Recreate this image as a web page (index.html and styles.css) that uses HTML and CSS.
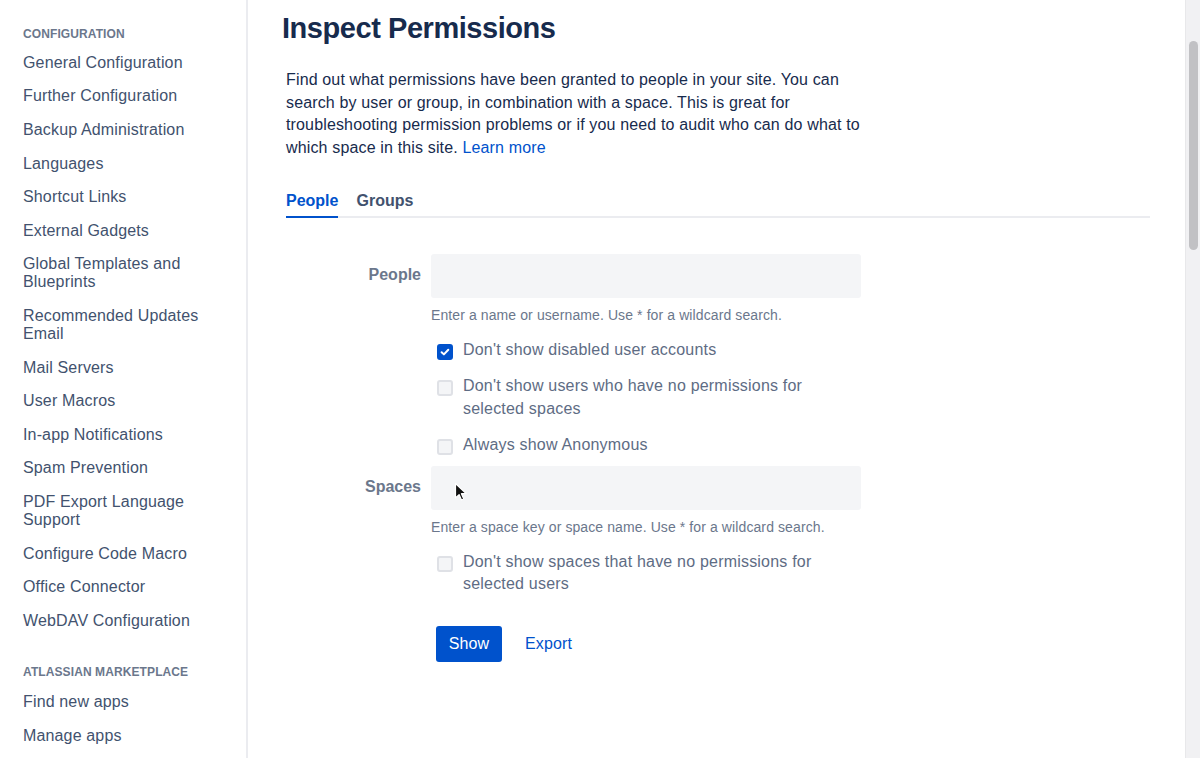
FILE: index.html
```html
<!DOCTYPE html>
<html lang="en">
<head>
<meta charset="utf-8">
<title>Inspect Permissions</title>
<link rel="stylesheet" href="styles.css">
</head>
<body>
<div class="app">
  <nav class="sidebar">
    <div class="nav-heading">Configuration</div>
    <ul class="nav-list">
      <li>General Configuration</li>
      <li>Further Configuration</li>
      <li>Backup Administration</li>
      <li>Languages</li>
      <li>Shortcut Links</li>
      <li>External Gadgets</li>
      <li>Global Templates and Blueprints</li>
      <li>Recommended Updates Email</li>
      <li>Mail Servers</li>
      <li>User Macros</li>
      <li>In-app Notifications</li>
      <li>Spam Prevention</li>
      <li>PDF Export Language Support</li>
      <li>Configure Code Macro</li>
      <li>Office Connector</li>
      <li>WebDAV Configuration</li>
    </ul>
    <div class="nav-heading nav-heading-2">Atlassian Marketplace</div>
    <ul class="nav-list">
      <li>Find new apps</li>
      <li>Manage apps</li>
    </ul>
  </nav>

  <main class="main">
    <h1 class="title">Inspect Permissions</h1>
    <p class="intro">Find out what permissions have been granted to people in your site. You can search by user or group, in combination with a space. This is great for troubleshooting permission problems or if you need to audit who can do what to which space in this site. <a class="link" href="#">Learn more</a></p>

    <div class="tabs">
      <span class="tab tab-active">People</span>
      <span class="tab">Groups</span>
    </div>

    <form class="form">
      <div class="field">
        <label class="field-label">People</label>
        <div class="field-body">
          <div class="input"></div>
          <div class="help">Enter a name or username. Use * for a wildcard search.</div>
          <div class="check">
            <span class="box box-checked"><svg viewBox="0 0 16 16" width="16" height="16"><path d="M4.6 8.2l2.3 2.2 4.4-4.6" fill="none" stroke="#fff" stroke-width="2" stroke-linecap="round" stroke-linejoin="round"/></svg></span>
            <span class="check-text">Don't show disabled user accounts</span>
          </div>
          <div class="check">
            <span class="box"></span>
            <span class="check-text">Don't show users who have no permissions for selected spaces</span>
          </div>
          <div class="check">
            <span class="box"></span>
            <span class="check-text">Always show Anonymous</span>
          </div>
        </div>
      </div>

      <div class="field">
        <label class="field-label">Spaces</label>
        <div class="field-body">
          <div class="input input-cursor">
            <svg class="cursor" viewBox="0 0 14 20" width="14" height="20"><path d="M1.5 1.5v14.5l3.6-3.4 2.4 5.4 2.3-1-2.4-5.3h5z" fill="#111" stroke="#fff" stroke-width="1.2" stroke-linejoin="round"/></svg>
          </div>
          <div class="help">Enter a space key or space name. Use * for a wildcard search.</div>
          <div class="check">
            <span class="box"></span>
            <span class="check-text">Don't show spaces that have no permissions for selected users</span>
          </div>
        </div>
      </div>

      <div class="actions">
        <button type="button" class="btn-primary">Show</button>
        <a class="link export" href="#">Export</a>
      </div>
    </form>
  </main>

  <div class="scrollbar"><div class="thumb"></div></div>
</div>
</body>
</html>
```

FILE: styles.css
```css
* { box-sizing: border-box; }
html, body { margin: 0; padding: 0; height: 100%; }
body {
  font-family: "Liberation Sans", Arial, sans-serif;
  color: #172b4d;
  background: #fff;
  overflow: hidden;
}
.app {
  display: flex;
  height: 758px;
}
.sidebar {
  width: 248px;
  flex: none;
  border-right: 2px solid #ebecf0;
  padding: 27px 0 0 23px;
}
.nav-heading {
  font-size: 12px;
  font-weight: 700;
  color: #6b778c;
  text-transform: uppercase;
  letter-spacing: 0.1px;
  line-height: 14px;
  margin-bottom: 5px;
}
.nav-heading-2 { margin-top: 27px; margin-bottom: 7px; }
.nav-list {
  list-style: none;
  margin: 0;
  padding: 0;
}
.nav-list li {
  font-size: 16px;
  line-height: 18px;
  letter-spacing: 0.15px;
  color: #42526e;
  padding: 7.8px 30px 7.8px 0;
}
.main {
  flex: 1;
  min-width: 0;
  padding: 11px 35px 0 38px;
}
.title {
  margin: 0 0 0 -4px;
  font-size: 29px;
  font-weight: 700;
  line-height: 34px;
  color: #172b4d;
  letter-spacing: -0.45px;
}
.intro {
  margin: 24px 0 0 0;
  max-width: 590px;
  font-size: 16px;
  line-height: 22.7px;
  letter-spacing: 0.15px;
  color: #172b4d;
}
.link { color: #0052cc; text-decoration: none; }
.tabs {
  display: flex;
  gap: 18px;
  margin-top: 30px;
  border-bottom: 2px solid #ebecf0;
}
.tab {
  font-size: 16px;
  font-weight: 700;
  line-height: 20px;
  color: #42526e;
  padding: 1px 0 5px;
  margin-bottom: -2px;
  border-bottom: 2px solid transparent;
}
.tab-active {
  color: #0052cc;
  border-bottom-color: #0052cc;
}
.form {
  margin-top: 36px;
}
.field {
  display: flex;
  gap: 10px;
}
.field + .field { margin-top: 9px; }
.field-label {
  width: 135px;
  flex: none;
  text-align: right;
  font-size: 16px;
  font-weight: 700;
  color: #6b778c;
  line-height: 20px;
  padding-top: 11px;
}
.field-body { width: 430px; }
.input {
  height: 44px;
  background: #f4f5f7;
  border-radius: 3px;
  position: relative;
}
.cursor {
  position: absolute;
  left: 23px;
  top: 16px;
}
.help {
  font-size: 14px;
  letter-spacing: 0.1px;
  color: #6b778c;
  line-height: 18px;
  margin-top: 8px;
}
.check {
  display: flex;
  align-items: flex-start;
  gap: 10px;
  margin: 18px 0 0 6px;
}
.check + .check { margin-top: 17px; }
.box {
  flex: none;
  width: 16px;
  height: 16px;
  margin-top: 2px;
  border: 2px solid #dfe1e6;
  background: #f4f5f7;
  border-radius: 3px;
  display: flex;
  align-items: center;
  justify-content: center;
}
.box-checked {
  background: #0052cc;
  border-color: #0052cc;
}
.box-checked svg { flex: none; }
.check-text {
  font-size: 16px;
  line-height: 22.5px;
  letter-spacing: 0.2px;
  color: #5e6c84;
  margin-top: -3px;
  padding-right: 8px;
}
.actions {
  display: flex;
  align-items: center;
  gap: 23px;
  margin: 30px 0 0 150px;
}
.btn-primary {
  height: 36px;
  width: 66px;
  border: none;
  border-radius: 3px;
  background: #0052cc;
  color: #fff;
  font-family: inherit;
  font-size: 16px;
  letter-spacing: 0.15px;
  padding: 0;
}
.export { font-size: 16px; letter-spacing: 0.15px; }
.scrollbar {
  width: 15px;
  flex: none;
  background: #f1f1f3;
  border-left: 1px solid #e8e8ea;
  padding: 41px 2px 0 3px;
}
.thumb {
  height: 209px;
  background: #c1c1c4;
  border-radius: 5px;
}
```
